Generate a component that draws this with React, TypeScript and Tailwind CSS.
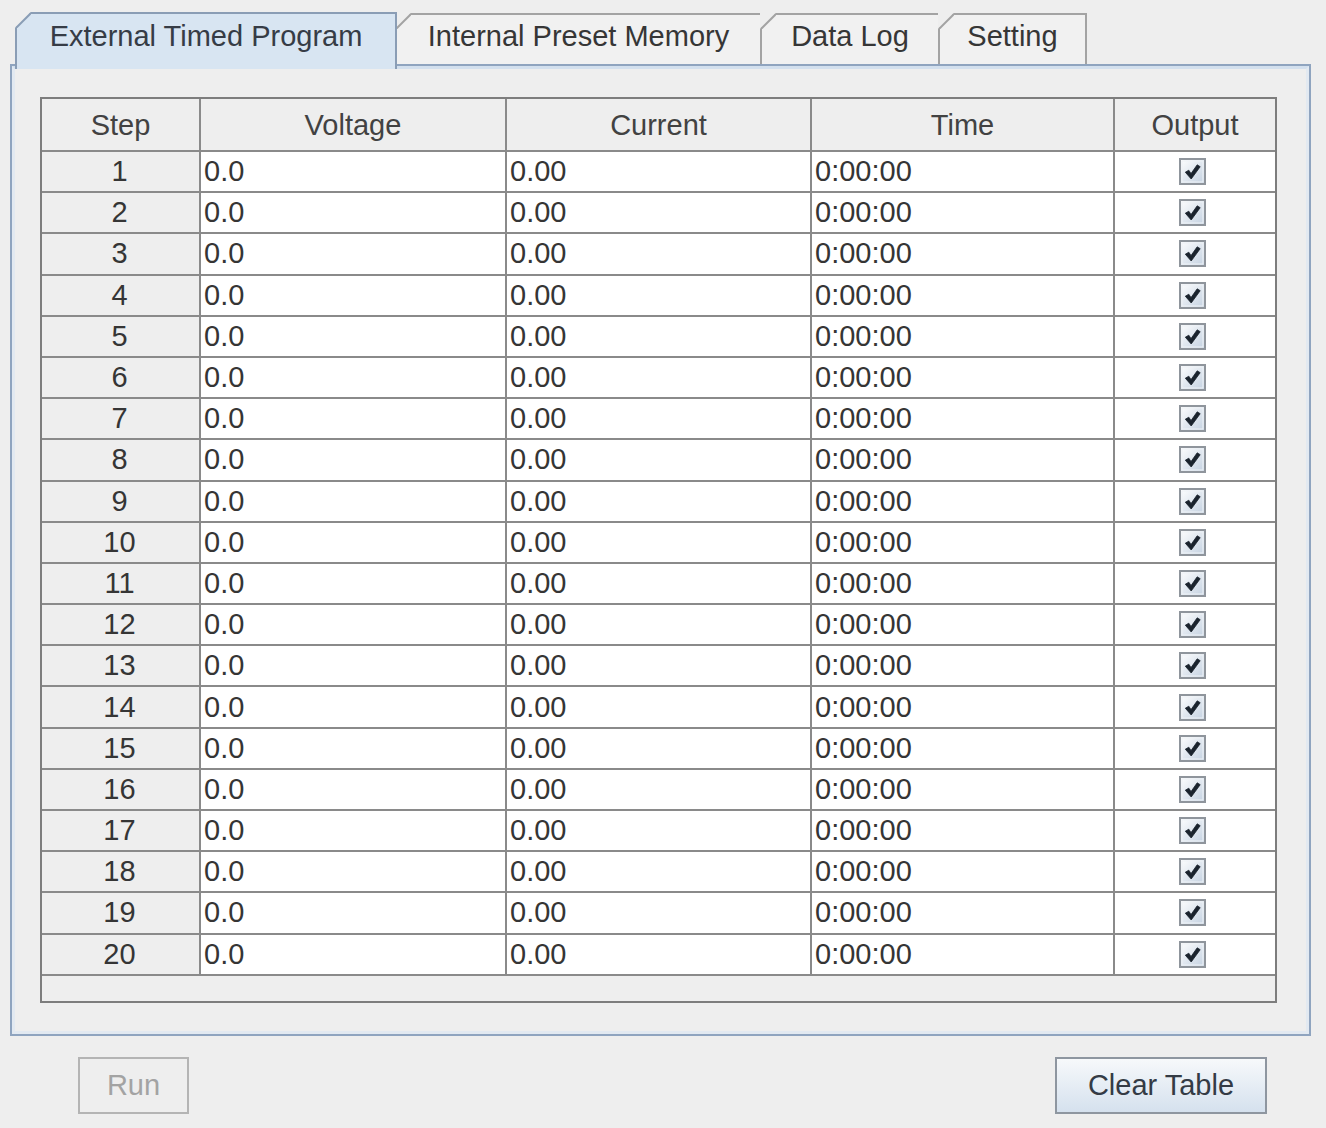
import React from "react";

const FONT = { fontFamily: '"Liberation Sans", Arial, sans-serif' };

function Corner({ stroke, fill }: { stroke: string; fill: string }) {
  return (
    <svg className="absolute -left-[2px] -top-[2px]" width="16" height="16" viewBox="0 0 16 16">
      <polygon points="0,0 16,0 0,16" fill={fill} />
      <line x1="1" y1="16" x2="16" y2="1" stroke={stroke} strokeWidth="2" />
    </svg>
  );
}

function Tab({ label, width, selected, first }: { label: string; width: number; selected?: boolean; first?: boolean }) {
  if (selected) {
    return (
      <div
        className="relative z-10 -mb-[5px] flex h-[57px] items-start justify-center border-2 border-b-0 border-[#8a9db5] bg-[#d8e5f2] pt-[8px] text-[29px] leading-none text-[#363c46]"
        style={{ width }}
      >
        <Corner stroke="#8a9db5" fill="#eeeeee" />
        <span>{label}</span>
      </div>
    );
  }
  return (
    <div
      className={`relative flex h-[51px] mt-[1px] items-start justify-center border-t-2 border-r-2 ${first ? "border-l-2" : "border-l-0"} border-[#a3a3a3] bg-[#f1f1f1] pt-[7px] text-[29px] leading-none text-[#363636]`}
      style={{ width }}
    >
      <Corner stroke="#a3a3a3" fill="#eeeeee" />
      <span>{label}</span>
    </div>
  );
}

function Check() {
  return (
    <svg width="27" height="27" viewBox="0 0 27 27">
      <defs>
        <linearGradient id="cbg" x1="0" y1="0" x2="1" y2="1">
          <stop offset="0" stopColor="#ffffff" />
          <stop offset="1" stopColor="#c2d0e0" />
        </linearGradient>
      </defs>
      <rect x="1" y="1" width="25" height="25" fill="url(#cbg)" stroke="#8f959c" strokeWidth="2" />
      <rect x="3" y="3" width="21" height="21" fill="none" stroke="#eef2f6" strokeWidth="1" />
      <path d="M6.3 14.2 L9.8 12.2 L12 15.6 L18.2 6.8 L21.2 8.7 L12.2 21 Z" fill="#1a232d" stroke="#1a232d" strokeWidth="0.8" strokeLinejoin="round" />
    </svg>
  );
}

const COLS = "grid grid-cols-[159px_306px_305px_303px_160px]";

export default function App() {
  const rows = Array.from({ length: 20 }, (_, i) => i + 1);
  return (
    <div className="h-[1128px] w-[1326px] overflow-hidden bg-[#eeeeee]" style={FONT}>
      {/* Tab strip */}
      <div className="flex h-[64px] items-start pl-[15px] pt-[12px]">
        <Tab label="External Timed Program" width={382} selected />
        <Tab label="Internal Preset Memory" width={365} />
        <Tab label="Data Log" width={178} />
        <Tab label="Setting" width={147} />
      </div>

      {/* Panel */}
      <div className="ml-[10px] h-[972px] w-[1301px] border-2 border-[#8fa4bf]">
        <div className="h-full w-full border-[3px] border-[#e2e9f1] border-t-[#d3e0ee] bg-[#eeeeee] pl-[25px] pt-[28px]">
          {/* Table */}
          <div className="flex h-[906px] w-[1237px] flex-col border-2 border-[#7d7d7d] bg-[#eeeeee]">
            <div className={`${COLS} h-[53px] border-b-2 border-[#8a8a8a] text-[29px] leading-none text-[#424242]`}>
              {["Step", "Voltage", "Current", "Time", "Output"].map((h, i) => (
                <div
                  key={h}
                  className={`flex items-center justify-center pt-[2px] ${i < 4 ? "border-r-2 border-[#8a8a8a]" : ""}`}
                >
                  {h}
                </div>
              ))}
            </div>
            {rows.map((n) => (
              <div key={n} className={`${COLS} h-[41.2px] border-b-2 border-[#8a8a8a] text-[29px] leading-none text-[#353535]`}>
                <div className="flex items-center justify-center border-r-2 border-[#8a8a8a] bg-[#eeeeee] pr-[2px]">{n}</div>
                <div className="flex items-center border-r-2 border-[#8a8a8a] bg-white pl-[3px]">0.0</div>
                <div className="flex items-center border-r-2 border-[#8a8a8a] bg-white pl-[3px]">0.00</div>
                <div className="flex items-center border-r-2 border-[#8a8a8a] bg-white pl-[3px]">0:00:00</div>
                <div className="flex items-center justify-center bg-white pr-[6px]">
                  <Check />
                </div>
              </div>
            ))}
          </div>
        </div>
      </div>

      {/* Buttons */}
      <div className="flex justify-between pl-[78px] pr-[59px] pt-[21px]">
        <button className="flex h-[57px] w-[111px] items-center justify-center border-2 border-[#b4b4b4] bg-[#eeeeee] text-[29px] leading-none text-[#a3a3a3]">
          Run
        </button>
        <button className="flex h-[57px] w-[212px] items-center justify-center border-2 border-[#8e96a0] bg-gradient-to-b from-[#f7f9fb] to-[#d5e1ee] text-[29px] leading-none text-[#343b45]">
          Clear Table
        </button>
      </div>
    </div>
  );
}
